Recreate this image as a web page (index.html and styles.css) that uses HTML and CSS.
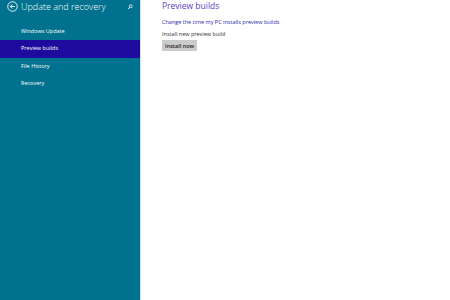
FILE: index.html
```html
<!DOCTYPE html>
<html lang="en">
<head>
  <meta charset="UTF-8" />
  <title>Update and recovery</title>
  <link rel="stylesheet" href="styles.css">
</head>
<body>
  <div class="app">
    <aside class="sidebar">
      <div class="sidebar-header">
        <svg class="back-icon" viewBox="0 0 12 12">
          <circle cx="6" cy="6" r="5.2" fill="none" stroke="#fff" stroke-width="1"/>
          <path d="M8.6 6H3.6M5.8 3.8L3.6 6l2.2 2.2" fill="none" stroke="#fff" stroke-width="1"/>
        </svg>
        <span class="sidebar-title">Update and recovery</span>
        <svg class="search-icon" viewBox="0 0 8 8">
          <circle cx="5" cy="3" r="2" fill="none" stroke="#fff" stroke-width="1"/>
          <path d="M3.6 4.4L1.2 6.8" stroke="#fff" stroke-width="1.2"/>
        </svg>
      </div>
      <nav class="nav">
        <div class="nav-item">Windows Update</div>
        <div class="nav-item active">Preview builds</div>
        <div class="nav-item">File History</div>
        <div class="nav-item">Recovery</div>
      </nav>
    </aside>

    <main class="content">
      <h1>Preview builds</h1>
      <a class="link" href="#">Change the time my PC installs preview builds</a>
      <div class="label">Install new preview build</div>
      <button class="btn">Install now</button>
    </main>
  </div>
</body>
</html>
```

FILE: styles.css
```css
:root {
  --teal: #00718e;
  --selected: #1e0a9c;
  --title: #5b3ec6;
  --link: #2c1fae;
}

body {
  margin: 0;
  font-family: "Open Sans", "Noto Sans", sans-serif;
  background: #fff;
}

.app {
  display: flex;
  height: 300px;
}

.sidebar {
  width: 140px;
  background: var(--teal);
  border-right: 1px solid #cfe2ea;
  color: #fff;
}

.sidebar-header {
  display: flex;
  align-items: center;
  height: 13px;
  padding-left: 7px;
}

.back-icon {
  width: 11px;
  height: 11px;
  margin-right: 3px;
}

.sidebar-title {
  font-size: 9px;
  font-weight: 300;
  line-height: 12px;
  flex: 1;
}

.search-icon {
  width: 6px;
  height: 6px;
  margin-right: 7px;
}

.nav {
  padding-top: 9.5px;
}

.nav-item {
  height: 17.5px;
  line-height: 17.5px;
  padding-left: 21px;
  font-size: 5.5px;
}

.nav-item.active {
  background: var(--selected);
}

.content {
  padding-left: 21px;
  display: flex;
  flex-direction: column;
  align-items: flex-start;
}

h1 {
  margin: 0;
  font-size: 8.5px;
  font-weight: 400;
  line-height: 11px;
  color: var(--title);
}

.link {
  margin-top: 8px;
  font-size: 5.5px;
  color: var(--link);
  text-decoration: none;
  line-height: 7px;
}

.label {
  margin-top: 5px;
  font-size: 5.5px;
  color: #333;
  line-height: 7px;
}

.btn {
  margin-top: 2px;
  width: 35px;
  height: 11px;
  padding: 0;
  border: none;
  background: #cccccc;
  color: #222;
  font-family: inherit;
  font-size: 5.5px;
  font-weight: 600;
}
```
